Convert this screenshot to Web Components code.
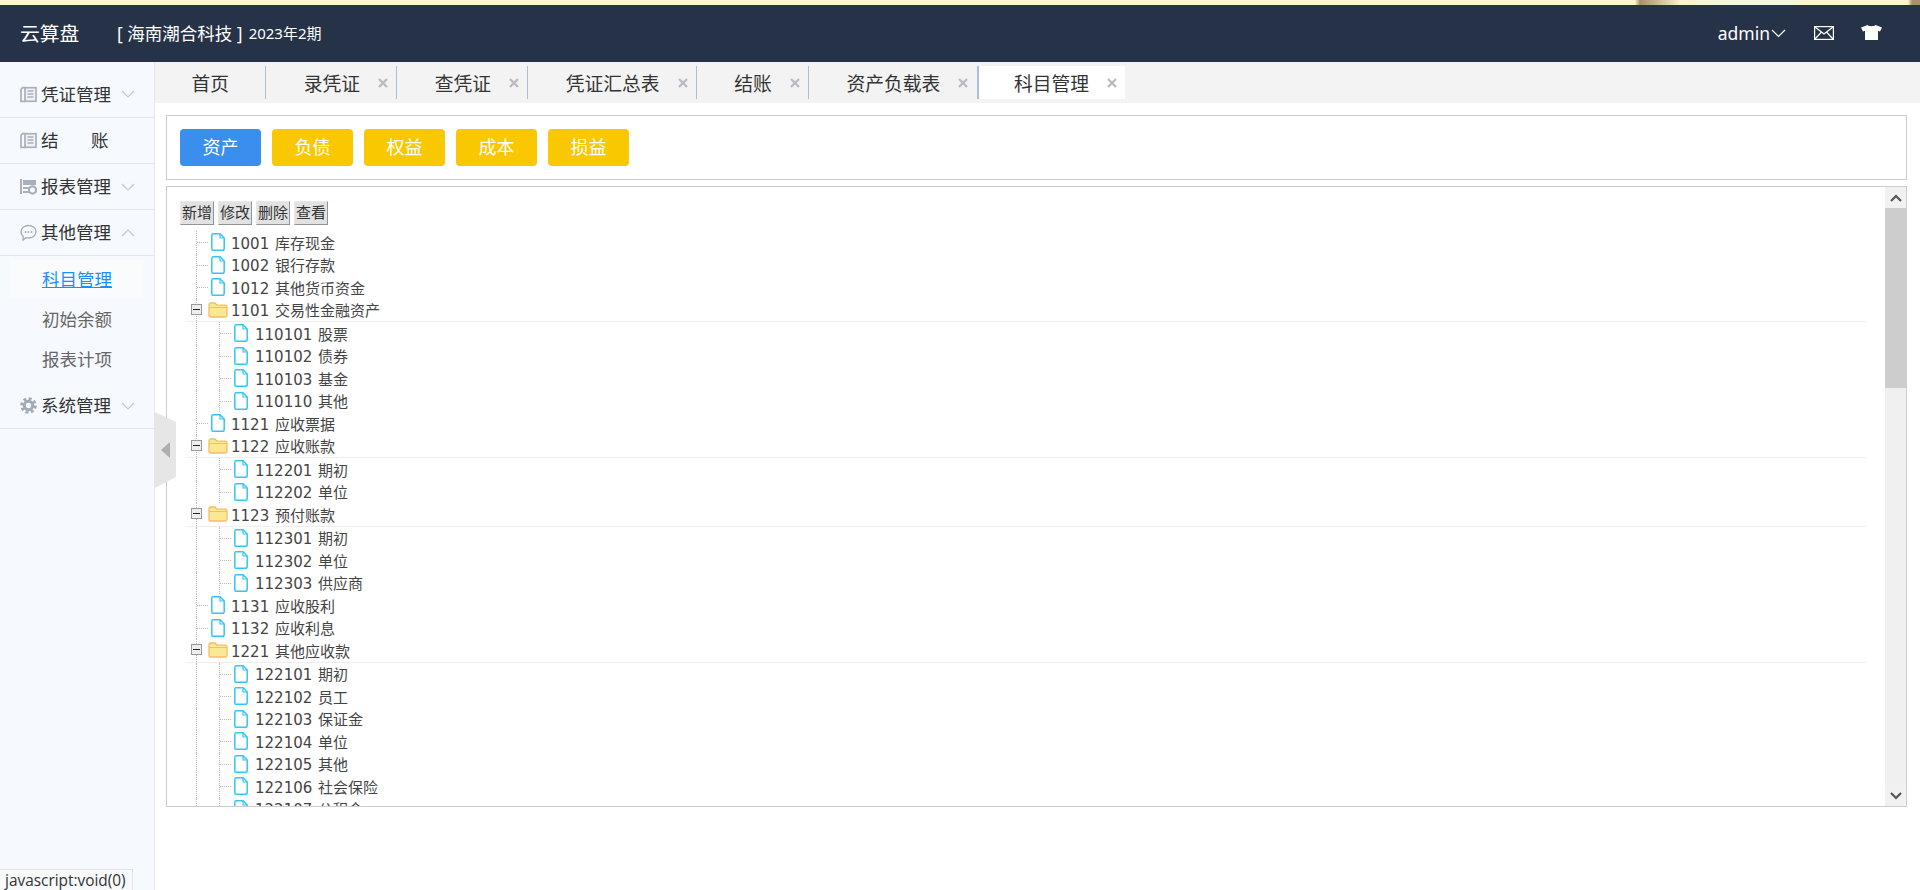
<!DOCTYPE html>
<html lang="zh">
<head>
<meta charset="utf-8">
<title>云算盘</title>
<style>
  html, body { margin: 0; height: 890px; overflow: hidden; background: #fff; }
  body { font-family: "Noto Sans", "Noto Sans CJK SC", sans-serif; color: #333; }
  app-shell { height: 890px; }
</style>
</head>
<body>
<app-shell>
  <top-bar slot="top"></top-bar>
  <side-nav slot="side">
    <nav-group label="凭证管理" icon="book" chevron="down" first></nav-group>
    <nav-group label="结 账" icon="book" spaced></nav-group>
    <nav-group label="报表管理" icon="report" chevron="down"></nav-group>
    <nav-group label="其他管理" icon="chat" chevron="up">
      <nav-link active>科目管理</nav-link>
      <nav-link>初始余额</nav-link>
      <nav-link>报表计项</nav-link>
    </nav-group>
    <nav-group label="系统管理" icon="gear" chevron="down"></nav-group>
  </side-nav>
  <tab-strip slot="main">
    <tab-item plain>首页</tab-item>
    <tab-item>录凭证</tab-item>
    <tab-item>查凭证</tab-item>
    <tab-item>凭证汇总表</tab-item>
    <tab-item>结账</tab-item>
    <tab-item>资产负载表</tab-item>
    <tab-item active>科目管理</tab-item>
  </tab-strip>
  <category-bar slot="main">
    <cat-button active>资产</cat-button>
    <cat-button>负债</cat-button>
    <cat-button>权益</cat-button>
    <cat-button>成本</cat-button>
    <cat-button>损益</cat-button>
  </category-bar>
  <account-tree slot="main"></account-tree>
</app-shell>

<script>
const FONT = '"Noto Sans", "Noto Sans CJK SC", sans-serif';

class AppShell extends HTMLElement {
  constructor() {
    super();
    this.attachShadow({ mode: 'open' });
    this.shadowRoot.innerHTML = `
      <style>
        :host { display: flex; flex-direction: column; position: relative; }
        .body { flex: 1; display: flex; min-height: 0; }
        .main { flex: 1; display: flex; flex-direction: column; min-width: 0; }
        .toggle { position: absolute; left: 155px; top: 412px; width: 21px; height: 76px; }
        .status {
          position: absolute; left: 0; bottom: 0; height: 20px; width: 127px;
          background: #f7f9fb; border: 1px solid #e4e4e4; border-left: 0; border-bottom: 0;
          font: 15.400px/21px "Open Sans", "Noto Sans", sans-serif; color: #333; padding-left: 5px;
        }
      </style>
      <slot name="top"></slot>
      <div class="body">
        <slot name="side"></slot>
        <div class="main"><slot name="main"></slot></div>
      </div>
      <svg class="toggle" viewBox="0 0 21 76">
        <polygon points="0,0 21,10 21,65 0,76" fill="#e6e6e6"/>
        <polygon points="6,38 15,30 15,46" fill="#aeaeae"/>
      </svg>
      <div class="status">javascript:void(0)</div>
    `;
  }
}

class TopBar extends HTMLElement {
  constructor() {
    super();
    this.attachShadow({ mode: 'open' });
    this.shadowRoot.innerHTML = `
      <style>
        :host { display: block; font-family: ${FONT}; color: #fff; }
        .strip {
          height: 5px;
          background: linear-gradient(90deg, #fbf4cd 0, #fbf4cd 1635px, #a8916c 1640px, #e9dcb6 1672px,
            #fbf4cd 1680px, #f3f6e0 1722px, #f3f6e0 1796px, #fbf4cd 1800px, #fbf4cd 1908px, #a8916c 1912px, #a8916c 100%);
        }
        .bar {
          height: 55px; padding-bottom: 2px; background: #263248; display: flex; align-items: center;
          padding-left: 20px; padding-right: 38px;
        }
        .logo { font-size: 19.800px; width: 97px; }
        .company { font-size: 17.5px; }
        .period { font-size: 15px; margin-left: 6px; }
        .space { flex: 1; }
        .user { font-size: 17.5px; display: flex; align-items: center; }
        .user svg { margin-left: 1px; margin-top: 2px; }
        .mail { margin-left: 28px; }
        .shirt { margin-left: 27px; }
      </style>
      <div class="strip"></div>
      <div class="bar">
        <span class="logo">云算盘</span>
        <span class="company">[ 海南潮合科技 ]</span>
        <span class="period">2023年2期</span>
        <span class="space"></span>
        <span class="user">admin
          <svg width="15" height="9" viewBox="0 0 15 9"><path d="M1 1l6.5 6.5L14 1" fill="none" stroke="#fff" stroke-width="1.2"/></svg>
        </span>
        <svg class="mail" width="20" height="14" viewBox="0 0 20 14" fill="none" stroke="#fff" stroke-width="1.2">
          <rect x=".6" y=".6" width="18.8" height="12.8"/><path d="M1 1l9 7 9-7M1 13l6.5-7M19 13l-6.5-7"/>
        </svg>
        <svg class="shirt" width="21" height="15" viewBox="0 0 21 15"><path d="M6.5 0c1 1.600 7 1.600 8 0L21 2.600 19 6.500 17 5.800V15H4V5.800L2 6.500 0 2.600z" fill="#fff"/></svg>
      </div>
    `;
  }
}

class SideNav extends HTMLElement {
  constructor() {
    super();
    this.attachShadow({ mode: 'open' });
    this.shadowRoot.innerHTML = `
      <style>
        :host {
          display: block; width: 154px; flex: none; background: #f6faff;
          border-right: 1px solid #e3e6ea; font-family: ${FONT};
        }
      </style>
      <slot></slot>
    `;
  }
}

const NAV_ICONS = {
  book: '<rect x="5" y="1.700" width="11" height="13.600" fill="#eef1f5" stroke="#aab0bb" stroke-width="1.700"/><path d="M5 1.700H2.500L1 3.500V15.300H5" fill="none" stroke="#aab0bb" stroke-width="1.700"/><path d="M7.500 5h6M7.500 8h6M7.500 11h6" stroke="#aab0bb" stroke-width="1.700"/>',
  report: '<path d="M1 1v15" stroke="#aab0bb" stroke-width="2"/><path d="M3 2h13v5H3z" fill="#aab0bb"/><path d="M3 9h6v2H3zM3 13h6v2H3z" fill="#aab0bb"/><circle cx="12.500" cy="12" r="3.600" fill="none" stroke="#aab0bb" stroke-width="2.200"/>',
  chat: '<path d="M8.500 1.500c4.200 0 7.500 2.800 7.500 6.300s-3.300 6.200-7.500 6.200c-.9 0-1.800-.1-2.600-.4L3 16l.3-3.500C1.900 11.300 1 9.700 1 7.800 1 4.300 4.300 1.500 8.500 1.500z" fill="none" stroke="#aab0bb" stroke-width="1.400"/><circle cx="5.500" cy="8" r="1" fill="#aab0bb"/><circle cx="8.500" cy="8" r="1" fill="#aab0bb"/><circle cx="11.500" cy="8" r="1" fill="#aab0bb"/>',
  gear: '<circle cx="8.500" cy="8.500" r="6.800" fill="none" stroke="#a4aab5" stroke-width="3" stroke-dasharray="2.900 2.440"/><circle cx="8.500" cy="8.500" r="4.200" fill="none" stroke="#a4aab5" stroke-width="3"/>'
};

class NavGroup extends HTMLElement {
  constructor() {
    super();
    this.attachShadow({ mode: 'open' });
  }

  connectedCallback() {
    const chevron = this.getAttribute('chevron');
    const chevronSvg = chevron
      ? `<svg class="chev" width="14" height="8" viewBox="0 0 14 8"><path d="${chevron === 'up' ? 'M1 7l6-6 6 6' : 'M1 1l6 6 6-6'}" fill="none" stroke="#c3c7ce" stroke-width="1.200"/></svg>`
      : '';
    this.shadowRoot.innerHTML = `
      <style>
        :host { display: block; }
        .head {
          height: 45px; display: flex; align-items: center;
          padding-left: 20px; border-bottom: 1px solid #e3e6ea;
          font-size: 17.5px; color: #333;
        }
        :host([first]) .head { height: 46px; padding-top: 9px; }
        .label { margin-left: 4px; margin-right: 1px; margin-top: -2px; width: 79px; white-space: nowrap; }
        :host([spaced]) .label { word-spacing: 28px; }
        .sub { padding: 4px 11px 5px 10px; display: flex; flex-direction: column; gap: 2px; }
        .sub.empty { display: none; }
      </style>
      <div class="head">
        <svg width="17" height="17" viewBox="0 0 17 17">${NAV_ICONS[this.getAttribute('icon')]}</svg>
        <span class="label">${this.getAttribute('label')}</span>
        ${chevronSvg}
      </div>
      <div class="sub ${this.children.length ? '' : 'empty'}"><slot></slot></div>
    `;
  }
}

class NavLink extends HTMLElement {
  constructor() {
    super();
    this.attachShadow({ mode: 'open' });
    this.shadowRoot.innerHTML = `
      <style>
        :host {
          display: block; height: 38px; line-height: 38px; padding-left: 32px;
          font-size: 17.5px; color: #666;
        }
        :host([active]) { background: #fafbfc; color: #1890ff; text-decoration: underline; }
      </style>
      <slot></slot>
    `;
  }
}

class TabStrip extends HTMLElement {
  constructor() {
    super();
    this.attachShadow({ mode: 'open' });
    this.shadowRoot.innerHTML = `
      <style>
        :host {
          display: flex; align-items: flex-start; height: 37px; padding-top: 4px;
          background: #f3f3f3; font-family: ${FONT};
        }
      </style>
      <slot></slot>
    `;
  }
}

class TabItem extends HTMLElement {
  constructor() {
    super();
    this.attachShadow({ mode: 'open' });
    this.shadowRoot.innerHTML = `
      <style>
        :host {
          display: flex; align-items: center; height: 33px;
          padding-left: 37.5px; font-size: 18.75px; color: #333;
          border-right: 1px solid #a9c0d6; white-space: nowrap;
        }
        :host([plain]) { padding-left: 36.500px; }
        :host([active]) {
          background: #fff; border-right: 0; border-left: 2px solid #a9c0d6;
          margin-left: -1px; padding-left: 35.500px;
        }
        svg { margin-left: 18px; margin-right: 8.250px; flex: none; }
        :host([plain]) svg { visibility: hidden; }
      </style>
      <slot></slot>
      <svg width="10" height="10" viewBox="0 0 10 10"><path d="M1 1l8 8M9 1l-8 8" stroke="#b8bcc2" stroke-width="2.400"/></svg>
    `;
  }
}

class CategoryBar extends HTMLElement {
  constructor() {
    super();
    this.attachShadow({ mode: 'open' });
    this.shadowRoot.innerHTML = `
      <style>
        :host {
          display: flex; gap: 11px; align-items: flex-start; height: 37px;
          margin: 12px 13px 0 11px; padding: 13px;
          border: 1px solid #ccc; font-family: ${FONT};
        }
      </style>
      <slot></slot>
    `;
  }
}

class CatButton extends HTMLElement {
  constructor() {
    super();
    this.attachShadow({ mode: 'open' });
    this.shadowRoot.innerHTML = `
      <style>
        :host {
          display: block; width: 81px; height: 37px; line-height: 37px; text-align: center;
          background: #fac800; color: #fff; border-radius: 4px; font-size: 18px;
        }
        :host([active]) { background: #3a8fee; }
      </style>
      <slot></slot>
    `;
  }
}

// code, name, depth; folders get the toggle box and the rule under the row
const ACCOUNTS = [
  ['1001', '库存现金', 0], ['1002', '银行存款', 0], ['1012', '其他货币资金', 0],
  ['1101', '交易性金融资产', 0, true],
  ['110101', '股票', 1], ['110102', '债券', 1], ['110103', '基金', 1], ['110110', '其他', 1],
  ['1121', '应收票据', 0],
  ['1122', '应收账款', 0, true],
  ['112201', '期初', 1], ['112202', '单位', 1],
  ['1123', '预付账款', 0, true],
  ['112301', '期初', 1], ['112302', '单位', 1], ['112303', '供应商', 1],
  ['1131', '应收股利', 0], ['1132', '应收利息', 0],
  ['1221', '其他应收款', 0, true],
  ['122101', '期初', 1], ['122102', '员工', 1], ['122103', '保证金', 1], ['122104', '单位', 1],
  ['122105', '其他', 1], ['122106', '社会保险', 1], ['122107', '公积金', 1]
];

const FILE_ICON = '<svg class="ic" width="14" height="18" viewBox="0 0 14 18"><path d="M1.800.8H9L13.200 5v10.400c0 1-.8 1.800-1.800 1.800H1.800c-1 0-1-.8-1-1.800V2.600c0-1 0-1.800 1-1.800z" fill="#fff" stroke="#35c5f5" stroke-width="1.500"/><path d="M9 .8V5h4.200" fill="none" stroke="#35c5f5" stroke-width="1.200"/></svg>';
const FOLDER_ICON = '<svg class="fd" width="20" height="16" viewBox="0 0 20 16"><path d="M1 3c0-1 .6-2 1.600-2h4.400l2 2.200h8c1 0 2 .8 2 1.800v8.500c0 1-.6 1.500-1.500 1.500H2.500C1.500 15 1 14.500 1 13.500z" fill="#fbe892" stroke="#f6bd62" stroke-width="1.300"/><path d="M1 5.500h18" stroke="#f6bd62" stroke-width="1"/></svg>';

class AccountTree extends HTMLElement {
  constructor() {
    super();
    this.attachShadow({ mode: 'open' });
  }

  connectedCallback() {
    this.shadowRoot.innerHTML = `
      <style>
        :host {
          display: flex; height: 619px; margin: 6px 13px 0 11px; flex: none;
          border: 1px solid #ccc; font-family: "DejaVu Sans", "Noto Sans CJK SC", sans-serif;
        }
        .content { flex: 1; min-width: 0; overflow: hidden; padding: 14px 19px 0 13px; }
        .tools { display: flex; gap: 4px; height: 24px; margin-bottom: 6px; }
        .tools span {
          box-sizing: border-box; width: 34px; height: 24px; line-height: 21px; text-align: center;
          font-size: 15px; color: #333; background: #e2e2e2; white-space: nowrap;
          border: 1px solid; border-color: #e8e8e8 #949494 #949494 #e8e8e8; font-family: ${FONT};
        }
        .rows { margin-left: 6px; }
        .row {
          position: relative; display: flex; align-items: center; height: 22.500px;
          padding-left: 10px; font-size: 15px; color: #444; white-space: nowrap; word-spacing: 1px;
        }
        .row.folder { height: 23.500px; box-sizing: border-box; border-bottom: 1px solid #eee; }
        .row.nested .ic { margin-right: 7px; }
        .guide {
          align-self: stretch; width: 22px; flex: none; position: relative;
          border-left: 1px dotted #bbb;
        }
        .link { width: 14px; flex: none; align-self: stretch; position: relative; border-left: 1px dotted #bbb; }
        .link::after { content: ""; position: absolute; left: 0; width: 11px; top: 50%; border-top: 1px dotted #bbb; }
        .folder .link::after { display: none; }
        .ic { flex: none; margin-right: 6px; }
        .fd { flex: none; margin-left: -3px; margin-right: 3px; }
        .box {
          position: absolute; left: -6px; top: 50%; margin-top: -6px; width: 9px; height: 9px;
          border: 1px solid #999; background: #eee;
        }
        .box::after { content: ""; position: absolute; left: 1px; right: 1px; top: 4px; height: 1px; background: #222; }
        .bar { width: 21px; flex: none; display: flex; flex-direction: column; background: #f0f0f0; }
        .arrow { height: 21px; display: flex; align-items: center; justify-content: center; background: #f1f1f1; }
        .thumb { height: 180px; background: #cdcdcd; }
        .track { flex: 1; }
      </style>
      <div class="content">
        <div class="tools"><span>新增</span><span>修改</span><span>删除</span><span>查看</span></div>
        <div class="rows">${ACCOUNTS.map(a => this.renderRow(a)).join('')}</div>
      </div>
      <div class="bar">
        <div class="arrow"><svg width="12" height="8" viewBox="0 0 12 8"><path d="M1 7l5-5 5 5" fill="none" stroke="#555" stroke-width="2.200"/></svg></div>
        <div class="thumb"></div>
        <div class="track"></div>
        <div class="arrow"><svg width="12" height="8" viewBox="0 0 12 8"><path d="M1 1l5 5 5-5" fill="none" stroke="#555" stroke-width="2.200"/></svg></div>
      </div>
    `;
  }

  renderRow([code, name, depth, folder]) {
    const guide = depth ? '<span class="guide"></span>' : '';
    const box = folder ? '<span class="box"></span>' : '';
    const icon = folder ? FOLDER_ICON : FILE_ICON;
    return `<div class="row ${folder ? 'folder' : ''} ${depth ? 'nested' : ''}">${guide}<span class="link">${box}</span>${icon}<span>${code} ${name}</span></div>`;
  }
}

customElements.define('app-shell', AppShell);
customElements.define('top-bar', TopBar);
customElements.define('side-nav', SideNav);
customElements.define('nav-group', NavGroup);
customElements.define('nav-link', NavLink);
customElements.define('tab-strip', TabStrip);
customElements.define('tab-item', TabItem);
customElements.define('category-bar', CategoryBar);
customElements.define('cat-button', CatButton);
customElements.define('account-tree', AccountTree);
</script>
</body>
</html>
